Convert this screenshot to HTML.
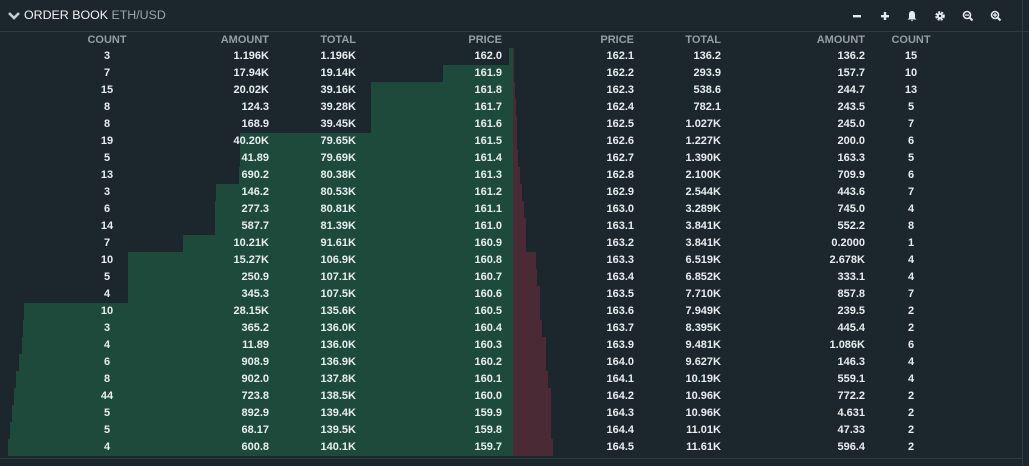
<!DOCTYPE html>
<html><head><meta charset="utf-8"><style>
*{margin:0;padding:0;box-sizing:border-box}
body{width:1029px;height:466px;background:#1b262d;font-family:"Liberation Sans",sans-serif;overflow:hidden;position:relative;color:#e9edef}
.hdr{position:absolute;left:0;top:0;width:1029px;height:32px;border-bottom:1px solid #2c3a42}
.title{position:absolute;left:24px;top:8px;font-size:12.4px;color:#f1f4f5}
.title span{color:#9aa4aa}
.chev{position:absolute;left:8px;top:11px}
.ic{position:absolute;top:10px;width:12px;height:12px}
.vline{position:absolute;left:1022px;top:0;width:1px;height:466px;background:#2c3a42}
.bline{position:absolute;left:0;top:458px;width:1022px;height:1px;background:#2c3a42}
.g{position:absolute;background:#1d4a3b;height:17px}
.r{position:absolute;background:#4a2a34;height:17px;left:513px}
.row{position:absolute;left:0;width:1022px;height:17px;font-size:11px;font-weight:bold;line-height:17px}
.row span{position:absolute;top:0}
.th{color:#959ea4}
.a{left:87px;width:40px;text-align:center}
.b{right:753px;text-align:right}
.c{right:666px;text-align:right}
.d{right:520px;text-align:right}
.e{right:388px;text-align:right}
.f{right:301px;text-align:right}
.h{right:157px;text-align:right}
.k{left:891px;width:40px;text-align:center}
</style></head><body>
<div class="hdr"></div>
<svg class="chev" width="12" height="10" viewBox="0 0 12 10"><path d="M1 2 L6 7 L11 2" stroke="#c8cfd3" stroke-width="2.6" fill="none"/></svg>
<div class="title">ORDER BOOK <span>ETH/USD</span></div>
<svg class="ic" style="left:851px" viewBox="0 0 12 12"><rect x="2" y="5" width="8" height="2.4" fill="#e6eaec"/></svg>
<svg class="ic" style="left:879px" viewBox="0 0 12 12"><rect x="2" y="5" width="8" height="2.4" fill="#e6eaec"/><rect x="4.8" y="2" width="2.4" height="8" fill="#e6eaec"/></svg>
<svg class="ic" style="left:906px" viewBox="0 0 12 12"><path d="M6 1 C3.5 1 3 3 3 5 L3 8 L1.5 9.5 L10.5 9.5 L9 8 L9 5 C9 3 8.5 1 6 1Z M5 10 L7 10 L6 11.5Z" fill="#e6eaec"/></svg>
<svg class="ic" style="left:934px" viewBox="0 0 12 12"><circle cx="6" cy="6" r="3.6" fill="none" stroke="#e6eaec" stroke-width="2.4" stroke-dasharray="2 1"/><circle cx="6" cy="6" r="3" fill="#e6eaec"/><circle cx="6" cy="6" r="1.2" fill="#1b262d"/></svg>
<svg class="ic" style="left:962px" viewBox="0 0 12 12"><circle cx="5" cy="5" r="3.5" fill="none" stroke="#e6eaec" stroke-width="1.6"/><path d="M7.5 7.5 L10.5 10.5" stroke="#e6eaec" stroke-width="2"/><rect x="3" y="4.4" width="4" height="1.3" fill="#e6eaec"/></svg>
<svg class="ic" style="left:990px" viewBox="0 0 12 12"><circle cx="5" cy="5" r="3.5" fill="none" stroke="#e6eaec" stroke-width="1.6"/><path d="M7.5 7.5 L10.5 10.5" stroke="#e6eaec" stroke-width="2"/><rect x="3" y="4.4" width="4" height="1.3" fill="#e6eaec"/><rect x="4.4" y="3" width="1.3" height="4" fill="#e6eaec"/></svg>
<div class="vline"></div>
<div class="bline"></div>

<div class="g" style="top:48px;left:509px;width:4px"></div>
<div class="g" style="top:65px;left:443px;width:70px"></div>
<div class="g" style="top:82px;left:371px;width:142px"></div>
<div class="g" style="top:99px;left:371px;width:142px"></div>
<div class="g" style="top:116px;left:371px;width:142px"></div>
<div class="g" style="top:133px;left:240px;width:273px"></div>
<div class="g" style="top:150px;left:240px;width:273px"></div>
<div class="g" style="top:167px;left:239px;width:274px"></div>
<div class="g" style="top:184px;left:216px;width:297px"></div>
<div class="g" style="top:201px;left:215px;width:298px"></div>
<div class="g" style="top:218px;left:215px;width:298px"></div>
<div class="g" style="top:235px;left:183px;width:330px"></div>
<div class="g" style="top:252px;left:128px;width:385px"></div>
<div class="g" style="top:269px;left:128px;width:385px"></div>
<div class="g" style="top:286px;left:128px;width:385px"></div>
<div class="g" style="top:303px;left:24px;width:489px"></div>
<div class="g" style="top:320px;left:23px;width:490px"></div>
<div class="g" style="top:337px;left:22px;width:491px"></div>
<div class="g" style="top:354px;left:19px;width:494px"></div>
<div class="g" style="top:371px;left:16px;width:497px"></div>
<div class="g" style="top:388px;left:14px;width:499px"></div>
<div class="g" style="top:405px;left:12px;width:501px"></div>
<div class="g" style="top:422px;left:10px;width:503px"></div>
<div class="g" style="top:439px;left:8px;width:505px"></div>

<div class="r" style="top:48px;width:1px"></div>
<div class="r" style="top:65px;width:1px"></div>
<div class="r" style="top:82px;width:2px"></div>
<div class="r" style="top:99px;width:3px"></div>
<div class="r" style="top:116px;width:4px"></div>
<div class="r" style="top:133px;width:4px"></div>
<div class="r" style="top:150px;width:5px"></div>
<div class="r" style="top:167px;width:7px"></div>
<div class="r" style="top:184px;width:9px"></div>
<div class="r" style="top:201px;width:11px"></div>
<div class="r" style="top:218px;width:13px"></div>
<div class="r" style="top:235px;width:13px"></div>
<div class="r" style="top:252px;width:23px"></div>
<div class="r" style="top:269px;width:24px"></div>
<div class="r" style="top:286px;width:27px"></div>
<div class="r" style="top:303px;width:27px"></div>
<div class="r" style="top:320px;width:29px"></div>
<div class="r" style="top:337px;width:33px"></div>
<div class="r" style="top:354px;width:33px"></div>
<div class="r" style="top:371px;width:35px"></div>
<div class="r" style="top:388px;width:38px"></div>
<div class="r" style="top:405px;width:38px"></div>
<div class="r" style="top:422px;width:38px"></div>
<div class="r" style="top:439px;width:40px"></div>

<div class="row th" style="top:32px"><span class="a">COUNT</span><span class="b">AMOUNT</span><span class="c">TOTAL</span><span class="d">PRICE</span><span class="e">PRICE</span><span class="f">TOTAL</span><span class="h">AMOUNT</span><span class="k">COUNT</span></div>
<div class="row" style="top:48px"><span class="a">3</span><span class="b">1.196K</span><span class="c">1.196K</span><span class="d">162.0</span><span class="e">162.1</span><span class="f">136.2</span><span class="h">136.2</span><span class="k">15</span></div>
<div class="row" style="top:65px"><span class="a">7</span><span class="b">17.94K</span><span class="c">19.14K</span><span class="d">161.9</span><span class="e">162.2</span><span class="f">293.9</span><span class="h">157.7</span><span class="k">10</span></div>
<div class="row" style="top:82px"><span class="a">15</span><span class="b">20.02K</span><span class="c">39.16K</span><span class="d">161.8</span><span class="e">162.3</span><span class="f">538.6</span><span class="h">244.7</span><span class="k">13</span></div>
<div class="row" style="top:99px"><span class="a">8</span><span class="b">124.3</span><span class="c">39.28K</span><span class="d">161.7</span><span class="e">162.4</span><span class="f">782.1</span><span class="h">243.5</span><span class="k">5</span></div>
<div class="row" style="top:116px"><span class="a">8</span><span class="b">168.9</span><span class="c">39.45K</span><span class="d">161.6</span><span class="e">162.5</span><span class="f">1.027K</span><span class="h">245.0</span><span class="k">7</span></div>
<div class="row" style="top:133px"><span class="a">19</span><span class="b">40.20K</span><span class="c">79.65K</span><span class="d">161.5</span><span class="e">162.6</span><span class="f">1.227K</span><span class="h">200.0</span><span class="k">6</span></div>
<div class="row" style="top:150px"><span class="a">5</span><span class="b">41.89</span><span class="c">79.69K</span><span class="d">161.4</span><span class="e">162.7</span><span class="f">1.390K</span><span class="h">163.3</span><span class="k">5</span></div>
<div class="row" style="top:167px"><span class="a">13</span><span class="b">690.2</span><span class="c">80.38K</span><span class="d">161.3</span><span class="e">162.8</span><span class="f">2.100K</span><span class="h">709.9</span><span class="k">6</span></div>
<div class="row" style="top:184px"><span class="a">3</span><span class="b">146.2</span><span class="c">80.53K</span><span class="d">161.2</span><span class="e">162.9</span><span class="f">2.544K</span><span class="h">443.6</span><span class="k">7</span></div>
<div class="row" style="top:201px"><span class="a">6</span><span class="b">277.3</span><span class="c">80.81K</span><span class="d">161.1</span><span class="e">163.0</span><span class="f">3.289K</span><span class="h">745.0</span><span class="k">4</span></div>
<div class="row" style="top:218px"><span class="a">14</span><span class="b">587.7</span><span class="c">81.39K</span><span class="d">161.0</span><span class="e">163.1</span><span class="f">3.841K</span><span class="h">552.2</span><span class="k">8</span></div>
<div class="row" style="top:235px"><span class="a">7</span><span class="b">10.21K</span><span class="c">91.61K</span><span class="d">160.9</span><span class="e">163.2</span><span class="f">3.841K</span><span class="h">0.2000</span><span class="k">1</span></div>
<div class="row" style="top:252px"><span class="a">10</span><span class="b">15.27K</span><span class="c">106.9K</span><span class="d">160.8</span><span class="e">163.3</span><span class="f">6.519K</span><span class="h">2.678K</span><span class="k">4</span></div>
<div class="row" style="top:269px"><span class="a">5</span><span class="b">250.9</span><span class="c">107.1K</span><span class="d">160.7</span><span class="e">163.4</span><span class="f">6.852K</span><span class="h">333.1</span><span class="k">4</span></div>
<div class="row" style="top:286px"><span class="a">4</span><span class="b">345.3</span><span class="c">107.5K</span><span class="d">160.6</span><span class="e">163.5</span><span class="f">7.710K</span><span class="h">857.8</span><span class="k">7</span></div>
<div class="row" style="top:303px"><span class="a">10</span><span class="b">28.15K</span><span class="c">135.6K</span><span class="d">160.5</span><span class="e">163.6</span><span class="f">7.949K</span><span class="h">239.5</span><span class="k">2</span></div>
<div class="row" style="top:320px"><span class="a">3</span><span class="b">365.2</span><span class="c">136.0K</span><span class="d">160.4</span><span class="e">163.7</span><span class="f">8.395K</span><span class="h">445.4</span><span class="k">2</span></div>
<div class="row" style="top:337px"><span class="a">4</span><span class="b">11.89</span><span class="c">136.0K</span><span class="d">160.3</span><span class="e">163.9</span><span class="f">9.481K</span><span class="h">1.086K</span><span class="k">6</span></div>
<div class="row" style="top:354px"><span class="a">6</span><span class="b">908.9</span><span class="c">136.9K</span><span class="d">160.2</span><span class="e">164.0</span><span class="f">9.627K</span><span class="h">146.3</span><span class="k">4</span></div>
<div class="row" style="top:371px"><span class="a">8</span><span class="b">902.0</span><span class="c">137.8K</span><span class="d">160.1</span><span class="e">164.1</span><span class="f">10.19K</span><span class="h">559.1</span><span class="k">4</span></div>
<div class="row" style="top:388px"><span class="a">44</span><span class="b">723.8</span><span class="c">138.5K</span><span class="d">160.0</span><span class="e">164.2</span><span class="f">10.96K</span><span class="h">772.2</span><span class="k">2</span></div>
<div class="row" style="top:405px"><span class="a">5</span><span class="b">892.9</span><span class="c">139.4K</span><span class="d">159.9</span><span class="e">164.3</span><span class="f">10.96K</span><span class="h">4.631</span><span class="k">2</span></div>
<div class="row" style="top:422px"><span class="a">5</span><span class="b">68.17</span><span class="c">139.5K</span><span class="d">159.8</span><span class="e">164.4</span><span class="f">11.01K</span><span class="h">47.33</span><span class="k">2</span></div>
<div class="row" style="top:439px"><span class="a">4</span><span class="b">600.8</span><span class="c">140.1K</span><span class="d">159.7</span><span class="e">164.5</span><span class="f">11.61K</span><span class="h">596.4</span><span class="k">2</span></div>
</body></html>
